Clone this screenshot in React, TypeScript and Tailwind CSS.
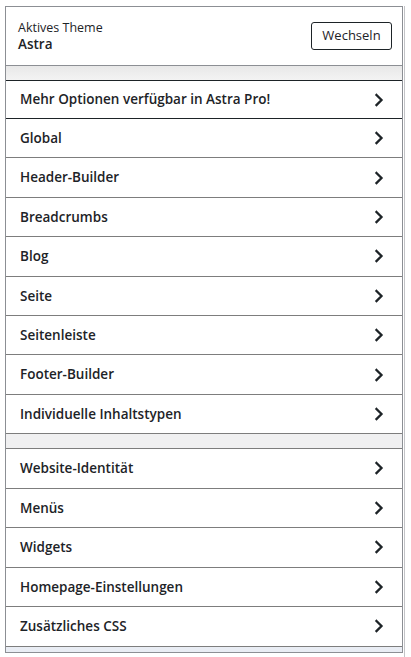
import { ReactNode } from "react";

const mainItems = [
  "Global",
  "Header-Builder",
  "Breadcrumbs",
  "Blog",
  "Seite",
  "Seitenleiste",
  "Footer-Builder",
  "Individuelle Inhaltstypen",
];

const wpItems = [
  "Website-Identität",
  "Menüs",
  "Widgets",
  "Homepage-Einstellungen",
  "Zusätzliches CSS",
];

function Chevron() {
  return (
    <svg width="10" height="14" viewBox="0 0 10 14" className="shrink-0">
      <polyline
        points="2.5,2 7.5,7 2.5,12"
        fill="none"
        stroke="#1d2327"
        strokeWidth="2.3"
        strokeLinecap="square"
        strokeLinejoin="miter"
      />
    </svg>
  );
}

function Row({ children, className = "" }: { children: ReactNode; className?: string }) {
  return (
    <div
      className={`flex items-center justify-between pl-[14px] pr-[18px] bg-white text-[13.5px] font-semibold text-[#1d2327] ${className}`}
    >
      <span>{children}</span>
      <Chevron />
    </div>
  );
}

export default function App() {
  return (
    <div
      className="bg-white min-h-screen pt-[6px] pl-[5px]"
      style={{ fontFamily: '"Open Sans", "Noto Sans", sans-serif' }}
    >
      <div className="w-[400px] border-r border-[#c3c4c7] pr-[1px] pb-[6px]">
        <div className="w-[398px] border border-[#8c8f94] bg-white">
          {/* Aktives Theme */}
          <div className="flex items-center justify-between h-[59px] pl-[12px] pr-[10px] border-b border-[#8c8f94]">
            <div className="leading-[17px] text-[#1d2327]">
              <div className="text-[12.5px]">Aktives Theme</div>
              <div className="text-[13.5px] font-semibold">Astra</div>
            </div>
            <button className="h-[28px] w-[81px] rounded-[3px] border border-[#1d2327] bg-white text-[13px] text-[#1d2327]">
              Wechseln
            </button>
          </div>

          <div className="h-[14px] bg-gradient-to-b from-[#e8e8e8] to-[#f3f3f3]" />

          <Row className="h-[39px] border-y border-[#1d2327]">
            Mehr Optionen verfügbar in Astra Pro!
          </Row>
          {mainItems.map((item) => (
            <Row key={item} className="h-[39.4px] border-b border-[#7d7d7d]">
              {item}
            </Row>
          ))}

          <div className="h-[15px] bg-[#f0f0f1] border-b border-[#7d7d7d]" />

          {wpItems.map((item) => (
            <Row key={item} className="h-[39.5px] border-b border-[#7d7d7d]">
              {item}
            </Row>
          ))}

          <div className="h-[5px] bg-[#e9edf4]" />
        </div>
      </div>
    </div>
  );
}
